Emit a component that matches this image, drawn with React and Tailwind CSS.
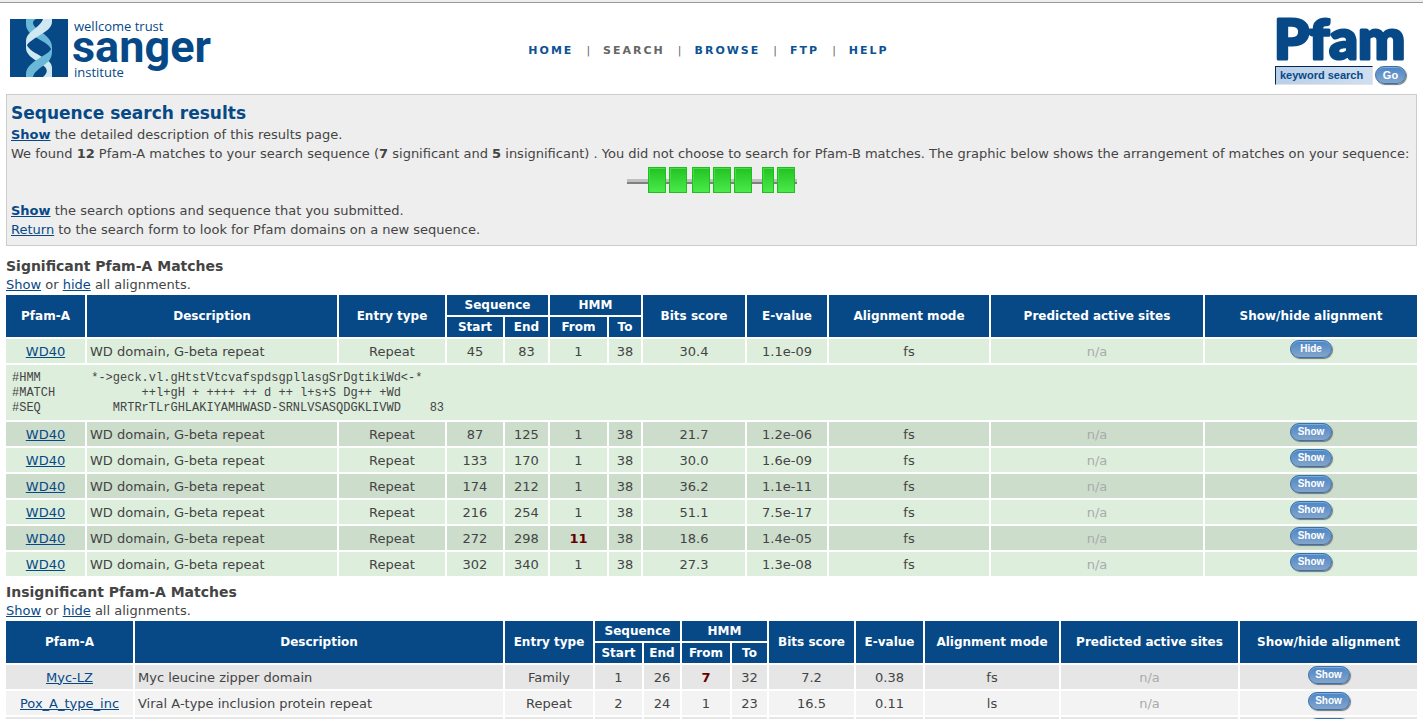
const navItems = [
  { label: "HOME" },
  { label: "SEARCH", current: true },
  { label: "BROWSE" },
  { label: "FTP" },
  { label: "HELP" },
];

const domains = [
  { x: 21, width: 18 },
  { x: 42, width: 18 },
  { x: 65, width: 18 },
  { x: 86, width: 18 },
  { x: 107, width: 18 },
  { x: 135, width: 12 },
  { x: 150, width: 18 },
];

const alignment = [
  "#HMM       *->geck.vl.gHtstVtcvafspdsgpllasgSrDgtikiWd<-*",
  "#MATCH            ++l+gH + ++++ ++ d ++ l+s+S Dg++ +Wd",
  "#SEQ          MRTRrTLrGHLAKIYAMHWASD-SRNLVSASQDGKLIVWD    83",
].join("\n");

const wd40 = { name: "WD40", description: "WD domain, G-beta repeat", type: "Repeat", to: 38, mode: "fs" };

const significant = [
  { ...wd40, start: 45, end: 83, from: 1, bits: "30.4", evalue: "1.1e-09", alignment },
  { ...wd40, start: 87, end: 125, from: 1, bits: "21.7", evalue: "1.2e-06" },
  { ...wd40, start: 133, end: 170, from: 1, bits: "30.0", evalue: "1.6e-09" },
  { ...wd40, start: 174, end: 212, from: 1, bits: "36.2", evalue: "1.1e-11" },
  { ...wd40, start: 216, end: 254, from: 1, bits: "51.1", evalue: "7.5e-17" },
  { ...wd40, start: 272, end: 298, from: 11, partial: true, bits: "18.6", evalue: "1.4e-05" },
  { ...wd40, start: 302, end: 340, from: 1, bits: "27.3", evalue: "1.3e-08" },
];

const insignificant = [
  { name: "Myc-LZ", description: "Myc leucine zipper domain", type: "Family", start: 1, end: 26, from: 7, partial: true, to: 32, bits: "7.2", evalue: "0.38", mode: "fs" },
  { name: "Pox_A_type_inc", description: "Viral A-type inclusion protein repeat", type: "Repeat", start: 2, end: 24, from: 1, to: 23, bits: "16.5", evalue: "0.11", mode: "ls" },
  {},
];

const significantCols = [
  "w-[79px]", "w-[250px]", "w-[106px]", "w-[56px]", "w-[43px]", "w-[57px]",
  "w-[32px]", "w-[102px]", "w-[80px]", "w-[160px]", "w-[212px]", "w-[212px]",
];

const insignificantCols = [
  "w-[127px]", "w-[368px]", "w-[88px]", "w-[47px]", "w-[36px]", "w-[48px]",
  "w-[35px]", "w-[85px]", "w-[67px]", "w-[134px]", "w-[177px]", "w-[177px]",
];

const TextLink = ({ children, className = "" }) => (
  <a href="#" className={`text-[#074987] underline ${className}`}>
    {children}
  </a>
);

const SangerLogo = () => (
  <svg width="204" height="62" viewBox="0 0 204 62" className="overflow-visible" role="img" aria-label="Wellcome Trust Sanger Institute">
    <defs>
      <clipPath id="helix">
        <rect x="16" width="26" height="58" />
      </clipPath>
    </defs>
    <rect width="58" height="58" fill="#074987" />
    <g clipPath="url(#helix)">
      <path d="M16 0 L26 0 C22 2 22 5 26 9 C34 15 42 20 42 28 L42 32 C40 26 34 23 27 19 C20 15 16 11 16 5 Z" fill="#6ab8d8" />
      <path d="M16 24 C18 31 26 34 32 38 C38 41 42 44 42 49 L42 58 L33 58 C37 55 38 51 35 48 C30 43 16 38 16 29 Z" fill="#cfe8f2" />
      <path d="M42 0 L33 0 C32 4 27 8 22 12 C17 16 16 19 16 23 L16 28 C18 23 24 20 30 16 C37 12 42 8 42 3 Z" fill="#cfe8f2" />
      <path d="M42 27 C42 31 37 35 31 38 C23 43 16 48 16 55 L16 58 L23 58 C24 53 29 50 34 46 C40 42 42 38 42 32 Z" fill="#6ab8d8" />
    </g>
    <g fill="#074987">
      <text x="64" y="12" fontFamily="'Open Sans', sans-serif" fontSize="13">wellcome trust</text>
      <text x="62" y="43" fontFamily="Roboto, sans-serif" fontWeight="700" fontSize="45">sanger</text>
      <text x="64" y="58" fontFamily="'Open Sans', sans-serif" fontSize="13">institute</text>
    </g>
  </svg>
);

const PfamLogo = () => (
  <svg width="132" height="44" viewBox="0 0 132 44" className="overflow-visible" role="img" aria-label="Pfam">
    <text x="-1" y="40" fontFamily="Lato, sans-serif" fontWeight="900" fontSize="56" fill="#074987" stroke="#074987" strokeWidth="3" strokeLinejoin="round">
      Pfam
    </text>
  </svg>
);

const PillButton = ({ children, className = "", ...props }) => (
  <button
    className={`rounded-full border border-[#3a70aa] bg-linear-to-b from-[#4a86c6] to-[#84a5cb] text-center font-['Liberation_Sans',sans-serif] font-bold text-white shadow-[1px_1px_1px_#777,inset_0_1px_0_#7fabdc] ${className}`}
    {...props}
  >
    {children}
  </button>
);

const Header = () => (
  <header className="flex items-center border-t border-[#999] px-2.5 pt-4 pb-[9px]">
    <div className="flex-1 self-start">
      <SangerLogo />
    </div>
    <nav className="flex gap-[13px] pb-1 text-[11px] text-[#666]">
      {navItems.map((item, index) => (
        <span key={item.label} className="flex gap-[13px]">
          {index > 0 && <span>|</span>}
          <a href="#" className={`font-bold tracking-[2px] ${item.current ? "text-[#666]" : "text-[#0b5394]"}`}>
            {item.label}
          </a>
        </span>
      ))}
    </nav>
    <div className="flex flex-1 justify-end pr-1.5">
      <form className="w-[132px]" onSubmit={(e) => e.preventDefault()}>
        <PfamLogo />
        <div className="mt-[3px] flex gap-0.5">
          <input
            type="text"
            aria-label="keyword search"
            defaultValue="keyword search"
            className="h-[19px] w-[98px] border border-t-[#002a55] border-r-[#e4e4e4] border-b-[#e4e4e4] border-l-[#002a55] bg-linear-to-r from-[#b9cfe8] to-[#d0dff0] pl-1 font-['Liberation_Sans',sans-serif] text-[11px] font-bold text-[#074987]"
          />
          <PillButton type="submit" className="h-[18px] w-[31px] text-[11px] leading-4">
            Go
          </PillButton>
        </div>
      </form>
    </div>
  </header>
);

const DomainGraphic = () => (
  <svg width="170" height="26" viewBox="0 0 170 26" className="mx-auto block" role="img" aria-label="Domain arrangement">
    <defs>
      <linearGradient id="domain" x1="0" y1="0" x2="0" y2="1">
        <stop offset="0" stopColor="#24c424" />
        <stop offset="1" stopColor="#4aea4a" />
      </linearGradient>
    </defs>
    <rect y="12" width="170" height="3" fill="#c0c0c0" />
    <rect y="15" width="170" height="2" fill="#808080" />
    {domains.map(({ x, width }) => (
      <g key={x}>
        <rect x={x} width={width} height="26" fill="#20bf20" />
        <rect x={x + 1} y="1" width={width - 2} height="24" fill="#44dd44" />
        <rect x={x + 2} y="2" width={width - 3} height="23" fill="url(#domain)" />
      </g>
    ))}
  </svg>
);

const Summary = () => (
  <section className="mx-1.5 border border-[#ccc] bg-[#eee] px-1 pt-1.5 pb-1.5">
    <h1 className="text-[17px] leading-6 font-bold text-[#074987]">Sequence search results</h1>
    <p>
      <TextLink className="font-bold">Show</TextLink> the detailed description of this results page.
    </p>
    <p>
      We found <b>12</b> Pfam-A matches to your search sequence (<b>7</b> significant and <b>5</b> insignificant) . You
      did not choose to search for Pfam-B matches. The graphic below shows the arrangement of matches on your sequence:
    </p>
    <div className="pt-1 pb-2">
      <DomainGraphic />
    </div>
    <p>
      <TextLink className="font-bold">Show</TextLink> the search options and sequence that you submitted.
    </p>
    <p>
      <TextLink>Return</TextLink> to the search form to look for Pfam domains on a new sequence.
    </p>
  </section>
);

const HeadCell = ({ children, ...props }) => (
  <th className="h-5 bg-[#074987] p-0 text-[12px] leading-5 font-bold text-white" {...props}>
    {children}
  </th>
);

const MatchRow = ({ row, color }) => (
  <>
    <tr className={color}>
      <td className="h-6 p-0">{row.name && <TextLink>{row.name}</TextLink>}</td>
      <td className="p-0 pl-[3px] text-left">{row.description}</td>
      <td className="p-0">{row.type}</td>
      <td className="p-0">{row.start}</td>
      <td className="p-0">{row.end}</td>
      <td className={row.partial ? "p-0 font-bold text-[#660000]" : "p-0"}>{row.from}</td>
      <td className="p-0">{row.to}</td>
      <td className="p-0">{row.bits}</td>
      <td className="p-0">{row.evalue}</td>
      <td className="p-0">{row.mode}</td>
      <td className="p-0 text-[#aaa]">{row.name && "n/a"}</td>
      <td className="p-0 pt-px align-top">
        <PillButton
          type="button"
          aria-label={row.alignment ? "Hide alignment" : "Show alignment"}
          className="mx-auto block h-[18px] w-[42px] text-[10px] leading-4"
        >
          {row.name && (row.alignment ? "Hide" : "Show")}
        </PillButton>
      </td>
    </tr>
    {row.alignment && (
      <tr className={color}>
        <td colSpan={12} className="px-1.5 pt-1.5 pb-1 text-left">
          <pre className="font-['Liberation_Mono',monospace] text-[12px] leading-[15px]">{row.alignment}</pre>
        </td>
      </tr>
    )}
  </>
);

const MatchTable = ({ title, rows, cols, colors, className }) => (
  <section className={className}>
    <h2 className="px-1.5 text-[14px] leading-5 font-bold">{title}</h2>
    <p className="px-1.5 leading-[17px]">
      <TextLink>Show</TextLink> or <TextLink>hide</TextLink> all alignments.
    </p>
    <div className="px-1">
      <table className="w-full border-separate border-spacing-[2px] text-center">
        <colgroup>
          {cols.map((width, index) => (
            <col key={index} className={width} />
          ))}
        </colgroup>
        <thead>
          <tr>
            <HeadCell rowSpan={2}>Pfam-A</HeadCell>
            <HeadCell rowSpan={2}>Description</HeadCell>
            <HeadCell rowSpan={2}>Entry type</HeadCell>
            <HeadCell colSpan={2}>Sequence</HeadCell>
            <HeadCell colSpan={2}>HMM</HeadCell>
            <HeadCell rowSpan={2}>Bits score</HeadCell>
            <HeadCell rowSpan={2}>E-value</HeadCell>
            <HeadCell rowSpan={2}>Alignment mode</HeadCell>
            <HeadCell rowSpan={2}>Predicted active sites</HeadCell>
            <HeadCell rowSpan={2}>Show/hide alignment</HeadCell>
          </tr>
          <tr>
            <HeadCell>Start</HeadCell>
            <HeadCell>End</HeadCell>
            <HeadCell>From</HeadCell>
            <HeadCell>To</HeadCell>
          </tr>
        </thead>
        <tbody>
          {rows.map((row, index) => (
            <MatchRow key={index} row={row} color={colors[index % 2]} />
          ))}
        </tbody>
      </table>
    </div>
  </section>
);

export default function App() {
  return (
    <div className="h-screen overflow-hidden border-t-2 border-[#eee] bg-white font-['DejaVu_Sans',Verdana,sans-serif] text-[13px] leading-[19px] text-[#444]">
      <Header />
      <main>
        <Summary />
        <MatchTable
          title="Significant Pfam-A Matches"
          rows={significant}
          cols={significantCols}
          colors={["bg-[#ddeedd]", "bg-[#ccddcc]"]}
          className="pt-2.5"
        />
        <MatchTable
          title="Insignificant Pfam-A Matches"
          rows={insignificant}
          cols={insignificantCols}
          colors={["bg-[#e6e6e6]", "bg-[#f3f3f3]"]}
          className="pt-1"
        />
      </main>
    </div>
  );
}
